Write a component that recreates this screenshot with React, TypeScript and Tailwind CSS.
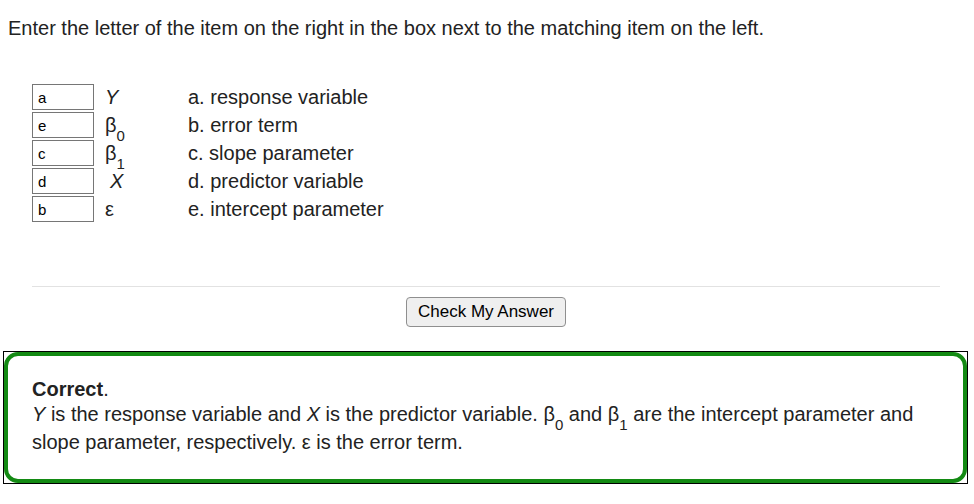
import React from 'react';

const Sub = ({ children }: { children: React.ReactNode }) => (
  <sub className="text-[15px] leading-none align-[-5px]">{children}</sub>
);

const rows = [
  { value: 'a', symbol: <i>Y</i>, indent: false },
  { value: 'e', symbol: <span>β<Sub>0</Sub></span>, indent: false },
  { value: 'c', symbol: <span>β<Sub>1</Sub></span>, indent: false },
  { value: 'd', symbol: <i>X</i>, indent: true },
  { value: 'b', symbol: <span>ε</span>, indent: false },
];

const items = [
  'a. response variable',
  'b. error term',
  'c. slope parameter',
  'd. predictor variable',
  'e. intercept parameter',
];

export default function App() {
  return (
    <div className="w-[974px] h-[504px] bg-white text-[#222] font-['Liberation_Sans',Arial,sans-serif] text-[20px] overflow-hidden">
      <p className="pl-[8px] pt-[15px] leading-[26px]">
        Enter the letter of the item on the right in the box next to the matching item on the left.
      </p>

      <div className="mt-[42px] ml-[32px] flex">
        <div className="flex flex-col">
          {rows.map((r, i) => (
            <div key={i} className="h-[28px] flex items-center">
              <input
                readOnly
                value={r.value}
                className="w-[62px] h-[26px] border border-[#767676] px-[5px] text-[15px] text-black font-['Liberation_Sans',Arial,sans-serif] outline-none"
              />
              <div className={`w-[94px] ${r.indent ? 'pl-[16px]' : 'pl-[11px]'} text-[20px] leading-[28px]`}>
                {r.symbol}
              </div>
            </div>
          ))}
        </div>
        <div className="flex flex-col">
          {items.map((t) => (
            <div key={t} className="h-[28px] leading-[28px]">{t}</div>
          ))}
        </div>
      </div>

      <div className="ml-[32px] mr-[34px] mt-[63px] border-t border-[#e2e2e2] flex justify-center pt-[10px]">
        <button className="w-[160px] h-[30px] rounded-[4px] border border-[#8f8f8f] bg-[#efefef] text-[17px] text-black font-['Liberation_Sans',Arial,sans-serif]">
          Check My Answer
        </button>
      </div>

      <div className="ml-[3px] mr-[6px] mt-[24px] border border-black">
        <div className="border-[4px] border-[#138a13] rounded-[14px] pl-[24px] pr-[20px] pt-[22px] pb-[23px] leading-[28px]">
          <div className="leading-[22px]"><b>Correct</b>.</div>
          <div>
            <i>Y</i> is the response variable and <i>X</i> is the predictor variable. β<Sub>0</Sub> and β<Sub>1</Sub> are the intercept parameter and slope parameter, respectively. ε is the error term.
          </div>
        </div>
      </div>
    </div>
  );
}
